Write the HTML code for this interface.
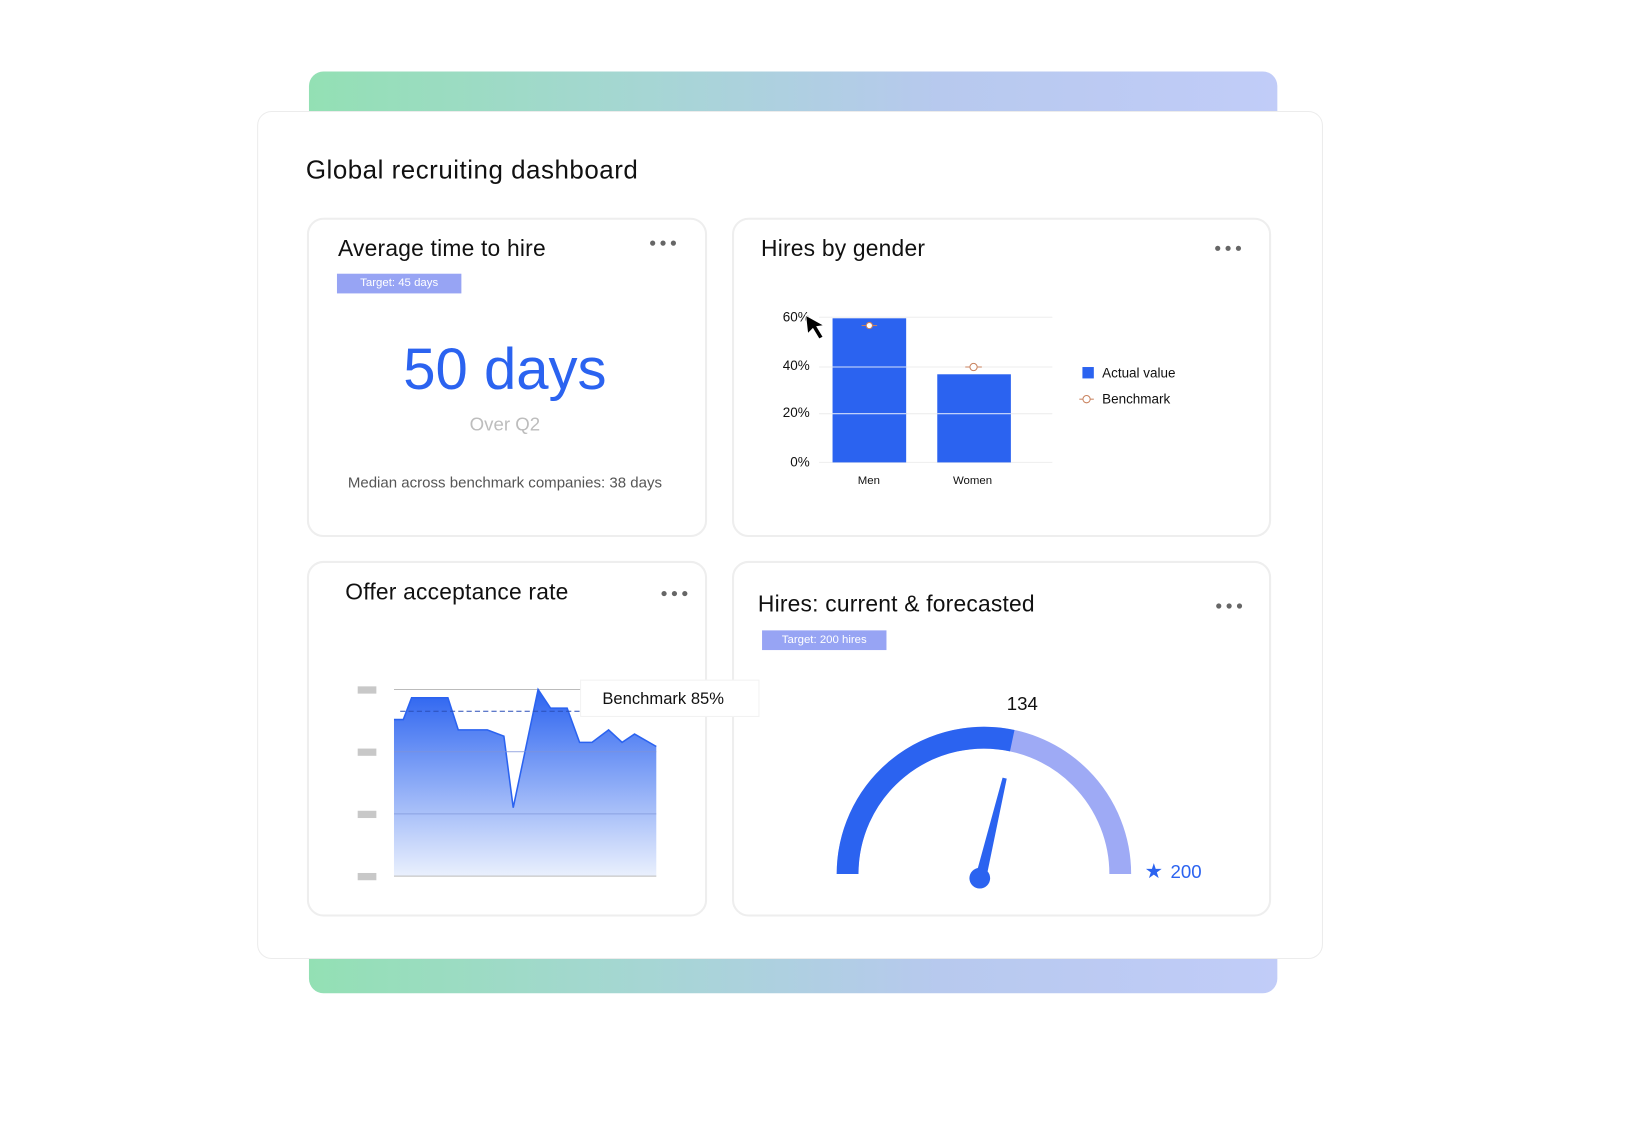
<!DOCTYPE html>
<html><head><meta charset="utf-8"><style>
html,body{margin:0;padding:0;background:#fff;width:1626px;height:1124px;overflow:hidden}
#w{position:absolute;left:0;top:0;width:1568px;height:1084px;transform:scale(1.0368);transform-origin:0 0;font-family:"Liberation Sans",sans-serif;color:#111}
.a{position:absolute}
.card{position:absolute;background:#fff;border:2px solid #eeeeee;border-radius:16px;box-sizing:border-box}
.t{position:absolute;font-size:22px;white-space:nowrap;color:#111;letter-spacing:0.2px}
.dots{position:absolute;display:flex;gap:5px}
.dots i{width:5px;height:5px;border-radius:50%;background:#666;display:block}
.badge{position:absolute;background:#97a4f4;color:#fff;font-size:11px;text-align:center;line-height:19px;height:19px}
</style></head><body><div id="w">
<div class="a" style="left:298px;top:69px;width:934px;height:60px;border-radius:14px 14px 0 0;background:linear-gradient(90deg,#93e0b4,#a6d6d4 35%,#b7c9ee 65%,#c1ccf8)"></div>
<div class="a" style="left:298px;top:900px;width:934px;height:58px;border-radius:0 0 14px 14px;background:linear-gradient(90deg,#93e0b4,#a6d6d4 35%,#b7c9ee 65%,#c1ccf8)"></div>
<div class="card" style="left:248px;top:107px;width:1028px;height:818px;border-radius:14px;border:1.5px solid #ececec"></div>
<div class="t" style="left:295px;top:150px;font-size:25px;letter-spacing:0.5px">Global recruiting dashboard</div>

<div class="card" style="left:296px;top:210px;width:386px;height:308px"></div>
<div class="t" style="left:326px;top:227px">Average time to hire</div>
<div class="dots" style="left:627px;top:232px"><i></i><i></i><i></i></div>
<div class="badge" style="left:325px;top:264px;width:120px">Target: 45 days</div>
<div class="a" style="left:294px;width:386px;top:325px;text-align:center;font-size:56px;color:#2b63f0;line-height:62px">50 days</div>
<div class="a" style="left:294px;width:386px;top:399px;text-align:center;font-size:18px;color:#bdbdbd">Over Q2</div>
<div class="a" style="left:294px;width:386px;top:458px;text-align:center;font-size:14.5px;color:#555">Median across benchmark companies: 38 days</div>

<div class="card" style="left:706px;top:210px;width:520px;height:308px"></div>
<div class="t" style="left:734px;top:227px">Hires by gender</div>
<div class="dots" style="left:1172px;top:237px"><i></i><i></i><i></i></div>
<svg class="a" style="left:706px;top:210px" width="520" height="308" viewBox="706 210 520 308" font-family="Liberation Sans,sans-serif">
<g stroke="#eee" stroke-width="1"><line x1="790" x2="1015" y1="306" y2="306"/><line x1="790" x2="1015" y1="354" y2="354"/><line x1="790" x2="1015" y1="399" y2="399"/><line x1="790" x2="1015" y1="446" y2="446"/></g>
<g font-size="13" text-anchor="end" fill="#111"><text x="781" y="310">60%</text><text x="781" y="357">40%</text><text x="781" y="402">20%</text><text x="781" y="450">0%</text></g>
<rect x="803" y="307" width="71" height="139" fill="#2b63f0"/><rect x="904" y="361" width="71" height="85" fill="#2b63f0"/>
<g stroke="#fff" stroke-opacity=".8"><line x1="803" x2="874" y1="354" y2="354"/><line x1="803" x2="874" y1="399" y2="399"/><line x1="904" x2="975" y1="399" y2="399"/></g>
<g stroke="#c9825e" fill="#fff"><line x1="831" x2="846" y1="314" y2="314"/><circle cx="838.5" cy="314" r="3"/><line x1="931" x2="947" y1="354" y2="354"/><circle cx="939" cy="354" r="3.5"/>
<line x1="1041" x2="1055" y1="385" y2="385"/><circle cx="1048" cy="385" r="3.5"/></g>
<g font-size="11" text-anchor="middle" fill="#111"><text x="838" y="467">Men</text><text x="938" y="467">Women</text></g>
<rect x="1044" y="354" width="11" height="11" fill="#2b63f0"/>
<g font-size="13" fill="#111"><text x="1063" y="364">Actual value</text><text x="1063" y="389">Benchmark</text></g>
<path d="M777 304 L779 322 L784 317 L790 327 L794 325 L788 315 L795 314 Z" fill="#000" stroke="#fff" stroke-width="1"/>
</svg>

<div class="card" style="left:296px;top:541px;width:386px;height:343px"></div>
<div class="t" style="left:333px;top:558px">Offer acceptance rate</div>
<div class="dots" style="left:638px;top:570px"><i></i><i></i><i></i></div>

<div class="card" style="left:706px;top:541px;width:520px;height:343px"></div>
<div class="t" style="left:731px;top:570px">Hires: current &amp; forecasted</div>
<div class="dots" style="left:1173px;top:582px"><i></i><i></i><i></i></div>
<div class="badge" style="left:735px;top:608px;width:120px">Target: 200 hires</div>
<svg class="a" style="left:706px;top:541px" width="520" height="343" viewBox="706 541 520 343" font-family="Liberation Sans,sans-serif">
<g transform="translate(0,3)">
<path d="M817.5 840 A131.5 131.5 0 0 1 1080.5 840" fill="none" stroke="#9eaaf5" stroke-width="21"/>
<path d="M817.5 840 A131.5 131.5 0 0 1 976.3 711.4" fill="none" stroke="#2b63f0" stroke-width="21"/>
<path d="M941 842 L967 747 L971 748 L951 845 Z" fill="#2b63f0"/>
<circle cx="945" cy="844" r="10" fill="#2b63f0"/>
<text x="986" y="682" font-size="18" text-anchor="middle" fill="#111">134</text>
<text x="1104" y="844" font-size="20" fill="#2b63f0">★</text>
<text x="1129" y="844" font-size="18" fill="#2b63f0">200</text>
</g>
</svg>

<svg class="a" style="left:296px;top:541px;overflow:visible;z-index:2" width="386" height="343" viewBox="296 541 386 343">
<defs><linearGradient id="g2" x1="0" y1="665" x2="0" y2="845" gradientUnits="userSpaceOnUse"><stop offset="0" stop-color="#2b63f0"/><stop offset="1" stop-color="#eaf0fd"/></linearGradient></defs>
<g fill="#c8c8c8"><rect x="345" y="662" width="18" height="7"/><rect x="345" y="722" width="18" height="7"/><rect x="345" y="782" width="18" height="7"/><rect x="345" y="842" width="18" height="7"/></g>
<line x1="380" x2="633" y1="665" y2="665" stroke="#bbb"/>
<path d="M380 694 L389 694 L397 673 L432 673 L442 704 L470 704 L486 710 L495 779 L519 665 L531 683 L547 683 L559 716 L571 716 L587 704 L600 716 L612 708 L633 720 L633 845 L380 845 Z" fill="url(#g2)"/>
<path d="M380 694 L389 694 L397 673 L432 673 L442 704 L470 704 L486 710 L495 779 L519 665 L531 683 L547 683 L559 716 L571 716 L587 704 L600 716 L612 708 L633 720" fill="none" stroke="#2b63f0" stroke-width="1.5"/>
<g stroke="#7d93d8" stroke-opacity=".7"><line x1="380" x2="633" y1="725" y2="725"/><line x1="380" x2="633" y1="785" y2="785"/></g>
<line x1="380" x2="633" y1="845" y2="845" stroke="#bbb"/>
<line x1="386" x2="560" y1="686" y2="686" stroke="#2a4fb8" stroke-dasharray="5 3"/>
<rect x="560" y="656" width="172" height="35" fill="#fff" stroke="#f2f2f2"/>
<text x="581" y="679" font-size="16" fill="#111" font-family="Liberation Sans,sans-serif">Benchmark 85%</text>
</svg>
</div></body></html>
